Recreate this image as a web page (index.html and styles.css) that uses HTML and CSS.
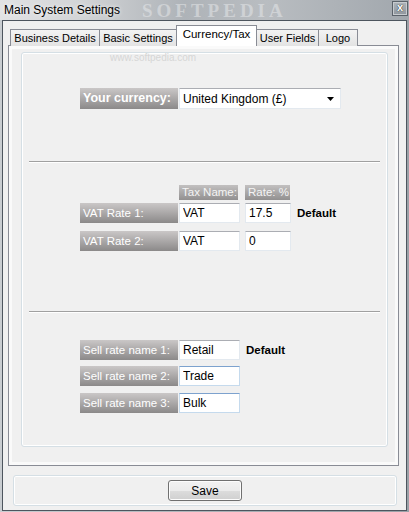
FILE: index.html
```html
<!DOCTYPE html>
<html lang="en">
<head>
    <meta charset="UTF-8">
    <title>Main System Settings</title>
    <link rel="stylesheet" href="styles.css">
</head>
<body>
    <div class="window">
        <div class="titlebar">
            <span class="title">Main System Settings</span>
            <span class="brand">SOFTPEDIA</span>
            <div class="close">x</div>
        </div>
        <div class="client">
            <div class="tabctl">
                <div class="tabs">
                    <div class="tab t1">Business Details</div>
                    <div class="tab t2">Basic Settings</div>
                    <div class="tab active">Currency/Tax</div>
                    <div class="tab t4">User Fields</div>
                    <div class="tab t5">Logo</div>
                </div>
                <div class="panel">
                    <div class="inner">
                        <div class="mark">www.softpedia.com</div>

                        <div class="row currency">
                            <div class="label big">Your currency:</div>
                            <div class="combo">
                                <span>United Kingdom (£)</span>
                                <svg width="7" height="4" viewBox="0 0 7 4"><path d="M0 0h7L3.5 4z" fill="#000"/></svg>
                            </div>
                        </div>

                        <div class="sep first"></div>

                        <div class="row heads">
                            <div class="head name">Tax Name:</div>
                            <div class="head rate">Rate: %</div>
                        </div>
                        <div class="row vat1">
                            <div class="label">VAT Rate 1:</div>
                            <input class="field name" value="VAT">
                            <input class="field rate" value="17.5">
                            <span class="def">Default</span>
                        </div>
                        <div class="row vat2">
                            <div class="label">VAT Rate 2:</div>
                            <input class="field name" value="VAT">
                            <input class="field rate" value="0">
                        </div>

                        <div class="sep second"></div>

                        <div class="row sell1">
                            <div class="label">Sell rate name 1:</div>
                            <input class="field name" value="Retail">
                            <span class="def">Default</span>
                        </div>
                        <div class="row sell2">
                            <div class="label">Sell rate name 2:</div>
                            <input class="field name hot" value="Trade">
                        </div>
                        <div class="row sell3">
                            <div class="label">Sell rate name 3:</div>
                            <input class="field name hot" value="Bulk">
                        </div>
                    </div>
                </div>
            </div>
            <div class="footer">
                <button>Save</button>
            </div>
        </div>
    </div>
</body>
</html>
```

FILE: styles.css
```css
body {
    margin: 0;
    font-family: "Liberation Sans", Arial, sans-serif;
    font-size: 12px;
    background-color: #f0f0f0;
}
.window {
    width: 409px;
    height: 512px;
    background: linear-gradient(90deg, #c9cdd1 0%, #b3b8bd 40%, #a3a9af 70%, #9ba1a7 100%);
    overflow: hidden;
}
.titlebar {
    position: relative;
    height: 20px;
    background: linear-gradient(90deg, #e2e3e4 0%, #d2d4d6 20%, #aeb3b8 45%, #b9bdc1 65%, #a1a7ad 100%);
}
.title {
    position: absolute;
    left: 4px;
    top: 3px;
    font-size: 12px;
    color: #000;
    text-shadow: 0 0 4px #fff;
}
.brand {
    position: absolute;
    left: 142px;
    top: 1px;
    font-family: "Liberation Serif", serif;
    font-weight: bold;
    font-size: 19px;
    line-height: 19px;
    letter-spacing: 4px;
    color: rgba(232, 234, 236, 0.5);
}
.close {
    position: absolute;
    right: 1px;
    top: 1px;
    width: 14px;
    height: 13px;
    border: 1px solid #5b626a;
    box-shadow: inset 0 0 0 1px #c7cbcf;
    background: linear-gradient(#aeb4ba, #8f969d);
    color: #fff;
    font-weight: bold;
    font-size: 11px;
    line-height: 11px;
    text-align: center;
    text-shadow: 0 0 1px #333, 0 0 1px #333;
}
.client {
    margin: 0 2px;
    height: 489px;
    border: 1px solid #4d555e;
    background-color: #f0f0f0;
}
.tabctl {
    margin: 4px 7px 0 5px;
}
.tabs {
    display: flex;
    align-items: flex-end;
    padding-left: 2px;
    height: 21px;
    position: relative;
    z-index: 1;
    margin-bottom: -1px;
}
.tab {
    box-sizing: border-box;
    height: 17px;
    line-height: 16px;
    border: 1px solid #898c95;
    border-bottom: none;
    margin-left: -1px;
    background: linear-gradient(#f3f3f3, #e3e3e3);
    color: #000;
    font-size: 11px;
    text-align: center;
    white-space: nowrap;
}
.t1 {
    width: 90px;
    margin-left: 0;
}
.t2 {
    width: 78px;
}
.t4 {
    width: 63px;
}
.t5 {
    width: 40px;
}
.tab.active {
    width: 81px;
    height: 21px;
    line-height: 16px;
    font-size: 11.5px;
    background: #fff;
    position: relative;
    z-index: 2;
}
.panel {
    height: 401px;
    border: 1px solid #898c95;
    padding: 6px 10px 12px 12px;
    background-color: #f0f0f0;
    box-shadow: inset 0 0 0 3px #fafafa;
}
.inner {
    height: 393px;
    border: 1px solid #d5dfe5;
    border-radius: 3px;
    box-shadow: inset 0 0 0 1px #fff;
}
.mark {
    margin-left: 88px;
    height: 12px;
    line-height: 10px;
    font-size: 10px;
    color: #d6d6d6;
}
.row {
    display: flex;
    align-items: center;
    padding-left: 58px;
}
.label {
    width: 95px;
    height: 20px;
    line-height: 20px;
    padding-left: 3px;
    color: #fff;
    background: linear-gradient(#cac7c7, #8b8989);
    white-space: nowrap;
    font-size: 11.5px;
}
.label.big {
    height: 21px;
    line-height: 21px;
    font-weight: bold;
    font-size: 12.5px;
}
.currency {
    margin-top: 23px;
}
.combo {
    width: 151px;
    height: 19px;
    margin-left: 1px;
    border: 1px solid #e3e9ef;
    border-top-color: #abadb3;
    background: #fff;
    display: flex;
    align-items: center;
    justify-content: space-between;
    padding: 0 6px 0 3px;
    font-size: 12px;
}
.sep {
    margin-left: 7px;
    width: 351px;
    height: 1px;
    background-color: #a0a0a0;
    border-bottom: 1px solid #fff;
}
.sep.first {
    margin-top: 52px;
}
.sep.second {
    margin-top: 60px;
}
.heads {
    margin-top: 22px;
    padding-left: 157px;
}
.head {
    height: 15px;
    line-height: 15px;
    padding-left: 3px;
    color: #f4f4f4;
    background: linear-gradient(#c2c0c0, #929090);
    box-sizing: border-box;
    white-space: nowrap;
    font-size: 11.5px;
}
.head.name {
    width: 59px;
}
.head.rate {
    width: 45px;
    margin-left: 7px;
}
.field {
    box-sizing: border-box;
    height: 20px;
    margin: 0 0 0 1px;
    padding: 0 3px;
    border: 1px solid #e3e9ef;
    border-top-color: #abadb3;
    background: #fff;
    font-family: "Liberation Sans", Arial, sans-serif;
    font-size: 12px;
    color: #000;
    outline: none;
}
.field.name {
    width: 61px;
}
.field.rate {
    width: 46px;
    margin-left: 5px;
}
.field.hot {
    border-color: #c5daed;
    border-top-color: #7da2ce;
}
.def {
    margin-left: 6px;
    font-weight: bold;
    font-size: 11.5px;
}
.vat1 {
    margin-top: 3px;
}
.vat2 {
    margin-top: 8px;
}
.sell1 {
    margin-top: 27px;
}
.sell2 {
    margin-top: 6px;
}
.sell3 {
    margin-top: 7px;
}
.footer {
    margin: 9px 0 0 10px;
    width: 382px;
    height: 25px;
    padding-top: 4px;
    border: 1px solid #d5dfe5;
    border-radius: 3px;
    box-shadow: inset 0 0 0 1px #fff;
    text-align: center;
}
button {
    width: 74px;
    height: 21px;
    border: 1px solid #707070;
    border-radius: 3px;
    background: linear-gradient(#f2f2f2 0%, #ebebeb 50%, #dddddd 50%, #cfcfcf 100%);
    box-shadow: inset 0 0 0 1px #fcfcfc;
    font-family: "Liberation Sans", Arial, sans-serif;
    font-size: 12px;
    color: #000;
    padding: 0;
}
```
